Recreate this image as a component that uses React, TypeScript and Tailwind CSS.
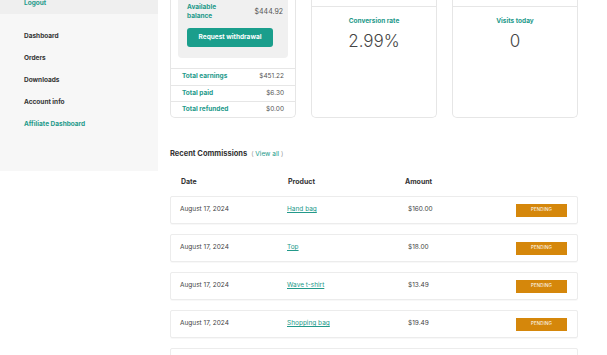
import React from "react";

const teal = "text-[#23998a]";

const commissions = [
  { date: "August 17, 2024", product: "Hand bag", amount: "$160.00" },
  { date: "August 17, 2024", product: "Top", amount: "$18.00" },
  { date: "August 17, 2024", product: "Wave t-shirt", amount: "$13.49" },
  { date: "August 17, 2024", product: "Shopping bag", amount: "$19.49" },
];

function StatCard({ label, value }: { label: string; value: string }) {
  return (
    <div className="w-[126px] h-[118px] border border-t-0 border-[#e6e6e6] rounded-b-[5px] bg-white flex flex-col">
      <div className="h-[7px] border-b border-[#e6e6e6]"></div>
      <div className="flex flex-col items-center pt-[10px]">
        <span className={`text-[6.5px] font-bold ${teal}`}>{label}</span>
        <span className="text-[17px] font-light text-[#444] leading-none mt-[6px]">{value}</span>
      </div>
    </div>
  );
}

export default function App() {
  return (
    <div
      className="w-[607px] h-[355px] overflow-hidden bg-white flex items-start gap-[12px]"
      style={{ fontFamily: "Inter, 'Noto Sans', sans-serif" }}
    >
      <div className="w-[158px] h-[171px] bg-[#f7f7f7] flex flex-col shrink-0">
        <div className="h-[14px] bg-[#efefef] pl-[24px] flex items-start">
          <span className={`text-[6.5px] font-bold leading-none ${teal}`}>Logout</span>
        </div>
        <div className="flex flex-col pl-[24px] pt-[18px] gap-[14px] text-[6.5px] font-bold text-[#333] leading-[8px]">
          <span>Dashboard</span>
          <span>Orders</span>
          <span>Downloads</span>
          <span>Account info</span>
          <span className={teal}>Affiliate Dashboard</span>
        </div>
      </div>

      <div className="w-[408px] flex flex-col shrink-0">
        <div className="flex gap-[15px]">
          <div className="w-[126px] h-[118px] border border-t-0 border-[#e6e6e6] rounded-b-[5px] bg-white flex flex-col">
            <div className="mx-[7px] bg-[#f0f0f0] rounded-b-[4px] pl-[9px] pr-[5px] pb-[11px] pt-[3px]">
              <div className="flex items-center justify-between">
                <span className={`text-[6.5px] font-bold leading-[9px] ${teal}`}>
                  Available
                  <br />
                  balance
                </span>
                <span className="text-[7px] text-[#555]">$444.92</span>
              </div>
              <button className="mt-[5px] w-[86px] h-[19px] rounded-[3px] bg-[#1a9e8c] text-white text-[6.5px] font-bold">
                Request withdrawal
              </button>
            </div>
            <div className="mt-[10px] flex flex-col text-[6.5px]">
              {[
                ["Total earnings", "$451.22"],
                ["Total paid", "$6.30"],
                ["Total refunded", "$0.00"],
              ].map(([k, v]) => (
                <div
                  key={k}
                  className="h-[16.5px] border-t border-[#e6e6e6] flex items-center justify-between pl-[11px] pr-[11px]"
                >
                  <span className={`font-bold ${teal}`}>{k}</span>
                  <span className="text-[#555]">{v}</span>
                </div>
              ))}
            </div>
          </div>
          <StatCard label="Conversion rate" value="2.99%" />
          <StatCard label="Visits today" value="0" />
        </div>

        <div className="mt-[30px] h-[12px] flex items-center gap-[4px] leading-none">
          <span className="text-[7.5px] font-bold text-[#333]">Recent Commissions</span>
          <span className={`text-[6.5px] ${teal}`}>
            <span className="text-[#999]">(</span> View all <span className="text-[#999]">)</span>
          </span>
        </div>

        <div className="mt-[16px] flex pl-[11px] text-[7px] font-bold text-[#333] h-[12px] items-center">
          <span className="w-[107px]">Date</span>
          <span className="w-[117px]">Product</span>
          <span>Amount</span>
        </div>

        <div className="mt-[8px] flex flex-col gap-[10px]">
          {commissions.map((c, i) => (
            <div
              key={i}
              className="h-[28px] border border-[#ececec] rounded-[2px] flex items-center pl-[9px] pr-[10px] text-[6.5px] text-[#444] shadow-[0_1px_1px_rgba(0,0,0,0.03)]"
            >
              <span className="w-[107px]">{c.date}</span>
              <span className="w-[121px]">
                <span className={`underline ${teal}`}>{c.product}</span>
              </span>
              <span className="flex-1">{c.amount}</span>
              <span className="w-[51px] h-[13px] bg-[#d5870b] text-white text-[4.5px] flex items-center justify-center tracking-wide">
                PENDING
              </span>
            </div>
          ))}
          <div className="h-[28px] border border-[#ececec] rounded-[2px]"></div>
        </div>
      </div>
    </div>
  );
}
